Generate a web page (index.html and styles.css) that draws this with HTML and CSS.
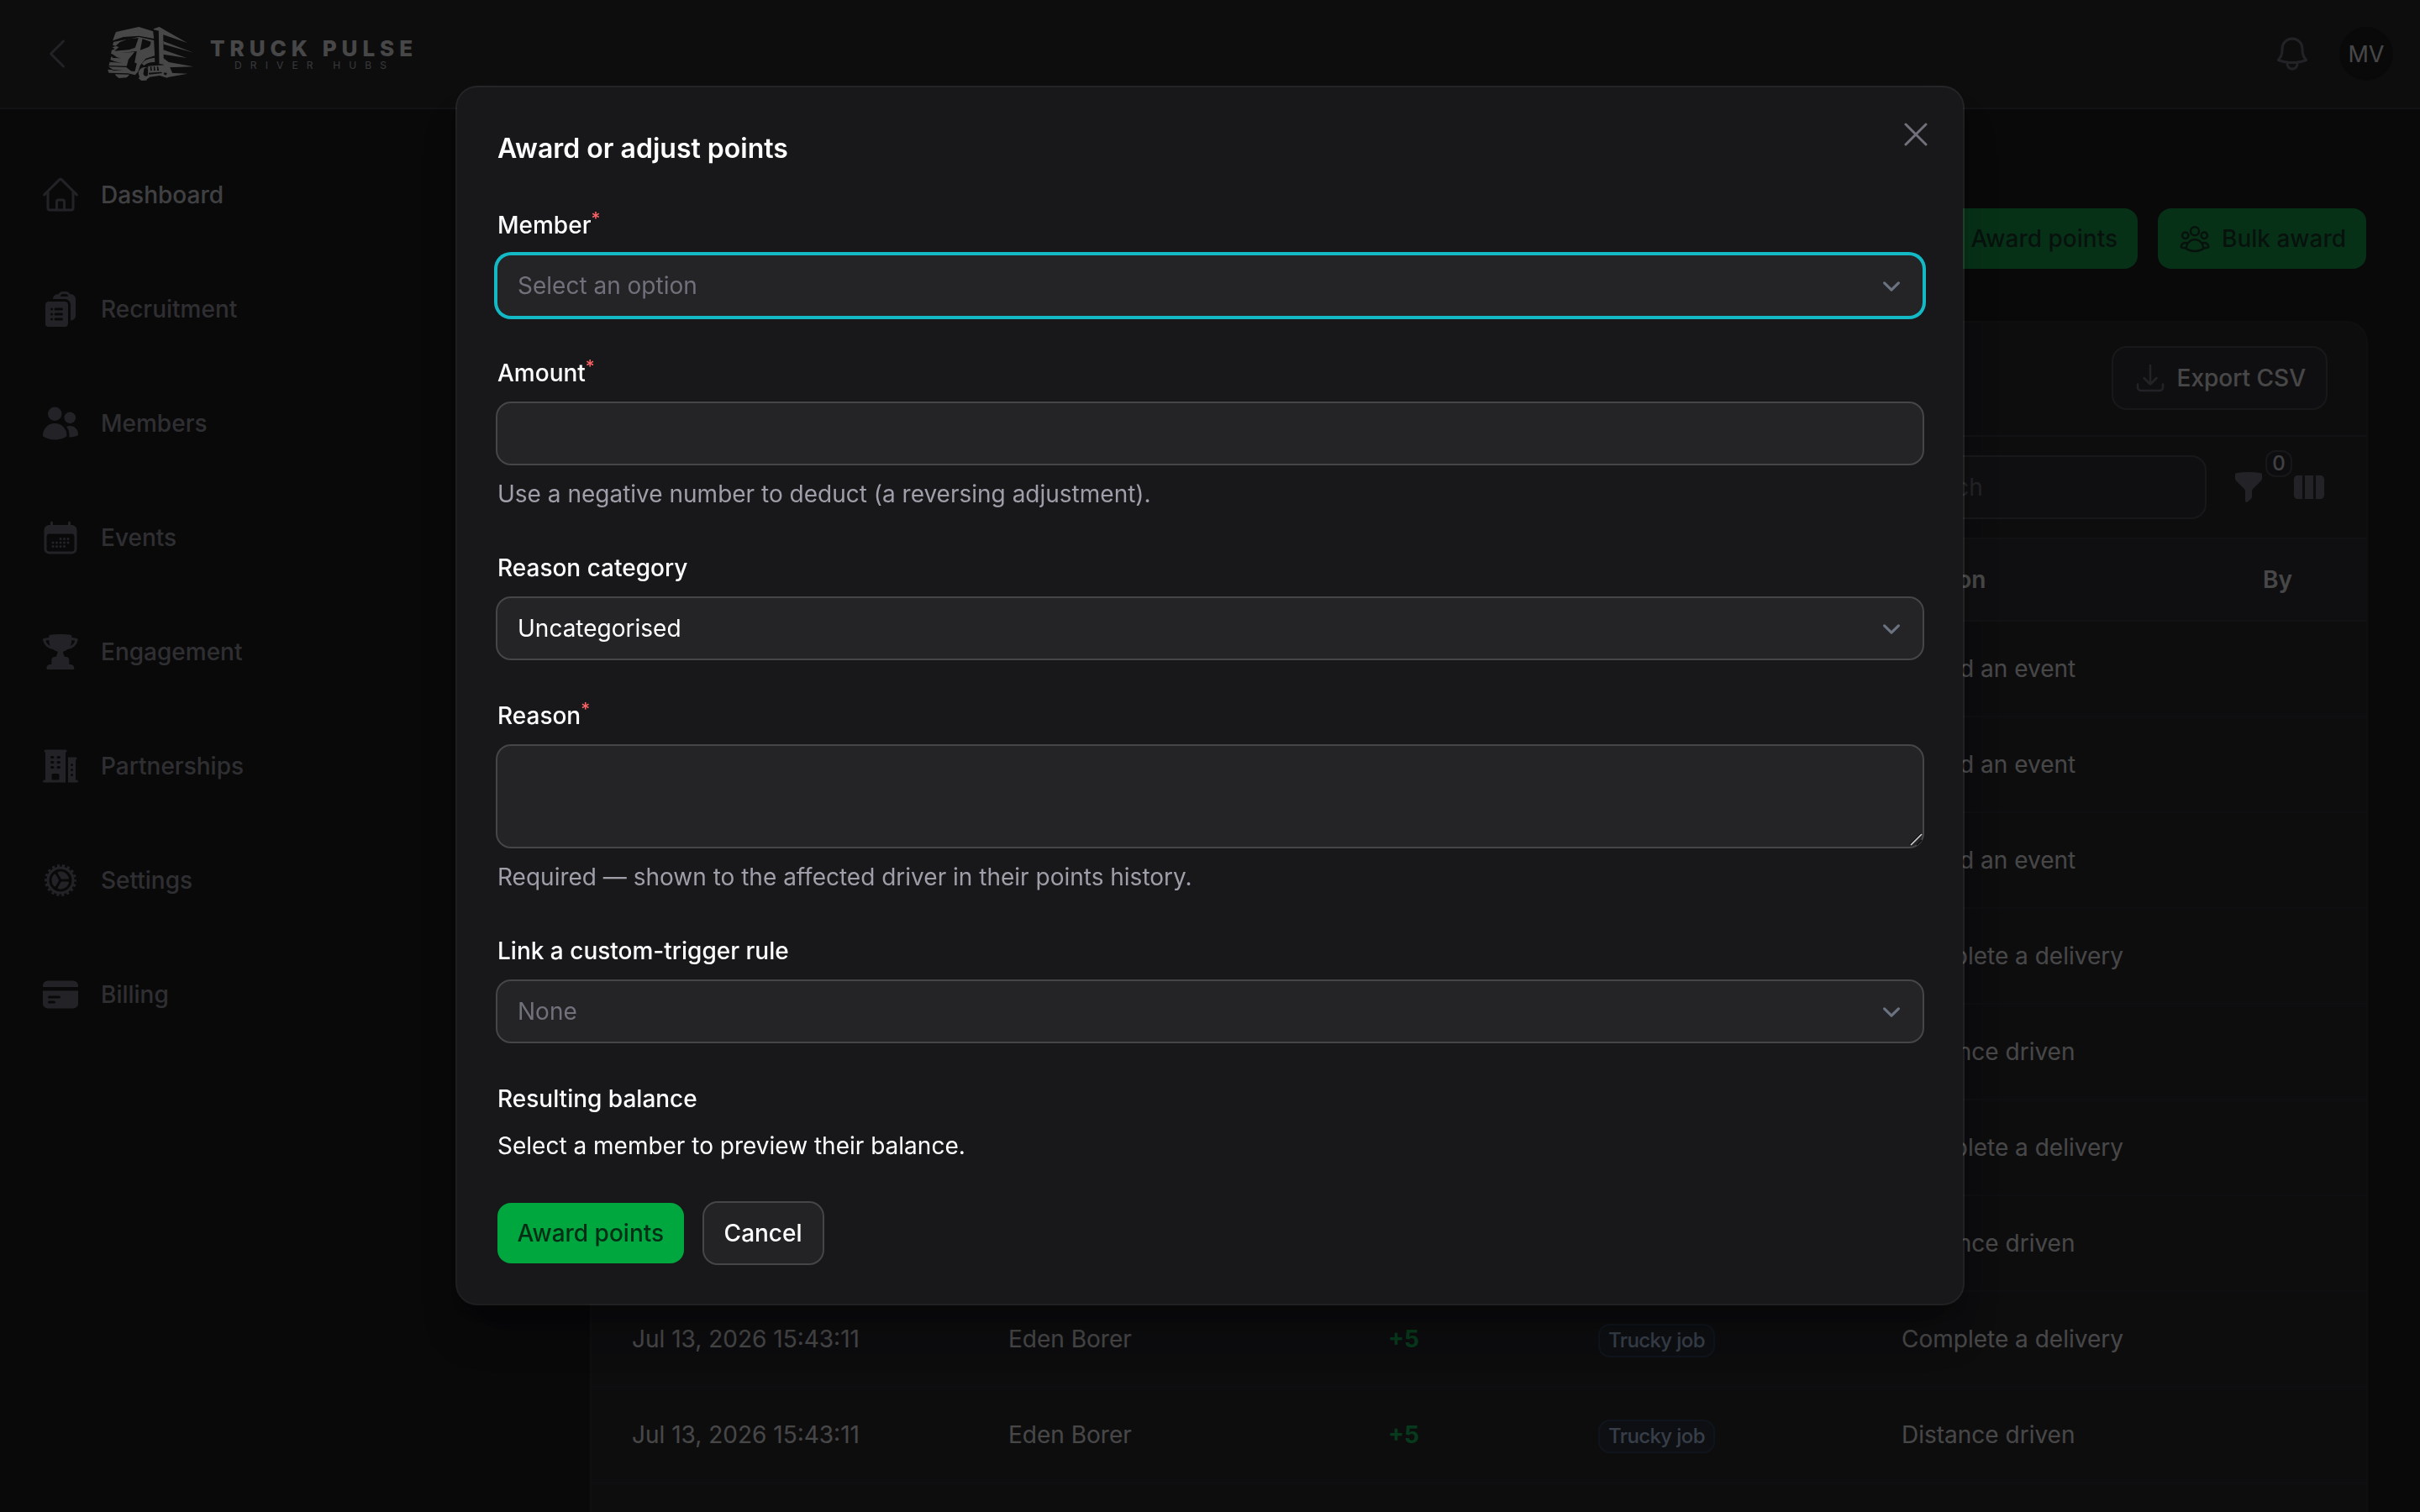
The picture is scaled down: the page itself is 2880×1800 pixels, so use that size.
FILE: index.html
```html
<!DOCTYPE html>
<html lang="en">
<head>
    <meta charset="UTF-8">
    <meta name="viewport" content="width=device-width, initial-scale=1.0">
    <title>Truck Pulse - Points</title>
    <link rel="stylesheet" href="styles.css">
</head>
<body>
    <header class="topbar">
        <svg class="icon icon-back" viewBox="0 0 24 24"><path d="M15.75 19.5 8.25 12l7.5-7.5"/></svg>
        <div class="brand">
            <svg class="brand-truck" viewBox="54 36 308 192">
                <path d="M84 54 165 36l51 16 3 26-54-10-55 4-38 13 8-23Z"/>
                <path fill-rule="evenodd" d="M75 90l90-18 54 12 3 55-32 10-20 24-8 24-14 10 10-40-8-4 8-40-92 10 2-14 12-4-10-6 14-4-12-4ZM98 90l-16 14 12 4-16 14 52-4 22-8 12-34-34 2ZM178 79l-8 40 28-10q10-6 10-20Z"/>
                <path d="M66 130l84-4-22 26-6 24-64-2 4-14 26 2-24-8 2-12 26 6Z"/>
                <path d="M56 178l64 2 18 14 24 2-10 12-26-6-68-2-4-12 20 2Z"/>
                <path d="M80 205l52 1-10 11-28 2-10-8Z"/>
                <path class="cut" d="M122 178l14-28 14-20-4 34-10 20Z"/>
                <path class="cut" d="M64 142l40 6-30-1ZM62 158l46 6-44-2ZM66 188l44 3-34 1Z"/>
                <path d="M218 43l20-7 14 10 2 124-16-2-2-118-18-4Z"/>
                <path d="M238 36l100 57-86-29ZM252 87l108 41-106-30ZM252 118l84 29-84-13ZM252 147l20 15 88 16-94 3-14-11ZM274 200l66 3-72 13Z"/>
                <path d="M176 168q8-18 46-22v16q-22-2-38 12Z"/>
                <path d="M198 176l62-4 16 8 10 24-20 14-26-8-42 6Z"/>
                <circle cx="186" cy="202" r="22"/>
                <path d="M168 214l30 2-6 11-18 1-10-8Z"/>
                <path class="cut" d="M184 186q12-10 14 4l-1 20q-12 6-16-6ZM206 178l4 0 2 14-5 1ZM218 178l4 0 2 14-5 1ZM230 178l4 0 3 14-6 1ZM200 200l44-3 6 4-48 5ZM256 199l10 2-4 8-8-4Z"/>
            </svg>
            <svg class="brand-name" viewBox="0 0 240 40">
                <text class="brand-title" x="0" y="23" textLength="241">TRUCK PULSE</text>
                <text class="brand-sub" x="29" y="38" textLength="181">DRIVER HUBS</text>
            </svg>
        </div>
        <div class="topbar-end">
            <svg class="icon" viewBox="0 0 24 24"><path d="M14.857 17.082a23.848 23.848 0 0 0 5.454-1.31A8.967 8.967 0 0 1 18 9.75V9A6 6 0 0 0 6 9v.75a8.967 8.967 0 0 1-2.312 6.022c1.733.64 3.56 1.085 5.455 1.31m5.714 0a24.255 24.255 0 0 1-5.714 0m5.714 0a3 3 0 1 1-5.714 0"/></svg>
            <div class="avatar">MV</div>
        </div>
    </header>

    <div class="layout">
        <nav class="sidebar">
            <a class="nav-item active">
                <svg class="icon" viewBox="0 0 24 24"><path d="m2.25 12 8.954-8.955c.44-.439 1.152-.439 1.591 0L21.75 12M4.5 9.75v10.125c0 .621.504 1.125 1.125 1.125H9.75v-4.875c0-.621.504-1.125 1.125-1.125h2.25c.621 0 1.125.504 1.125 1.125V21h4.125c.621 0 1.125-.504 1.125-1.125V9.75M8.25 21h8.25"/></svg>
                Dashboard
            </a>
            <a class="nav-item">
                <svg class="icon solid" viewBox="0 0 24 24"><path d="M7.502 6h7.128A3.375 3.375 0 0 1 18 9.375v9.375a3 3 0 0 0 3-3V6.108c0-1.505-1.125-2.811-2.664-2.94a48.972 48.972 0 0 0-.673-.05A3 3 0 0 0 15 1.5h-1.5a3 3 0 0 0-2.663 1.618c-.225.015-.45.032-.673.05C8.662 3.295 7.554 4.542 7.502 6ZM13.5 3A1.5 1.5 0 0 0 12 4.5h4.5A1.5 1.5 0 0 0 15 3h-1.5Z"/><path d="M3 9.375C3 8.339 3.84 7.5 4.875 7.5h9.75c1.036 0 1.875.84 1.875 1.875v11.25c0 1.035-.84 1.875-1.875 1.875h-9.75A1.875 1.875 0 0 1 3 20.625V9.375ZM6 12a.75.75 0 0 0 1.5 0 .75.75 0 0 0-1.5 0Zm2.25 0a.75.75 0 0 1 .75-.75h3.75a.75.75 0 0 1 0 1.5H9a.75.75 0 0 1-.75-.75ZM6 15a.75.75 0 0 0 1.5 0 .75.75 0 0 0-1.5 0Zm2.25 0a.75.75 0 0 1 .75-.75h3.75a.75.75 0 0 1 0 1.5H9a.75.75 0 0 1-.75-.75ZM6 18a.75.75 0 0 0 1.5 0 .75.75 0 0 0-1.5 0Zm2.25 0a.75.75 0 0 1 .75-.75h3.75a.75.75 0 0 1 0 1.5H9a.75.75 0 0 1-.75-.75Z"/></svg>
                Recruitment
            </a>
            <a class="nav-item">
                <svg class="icon solid" viewBox="0 0 24 24"><path d="M4.5 6.375a4.125 4.125 0 1 1 8.25 0 4.125 4.125 0 0 1-8.25 0ZM14.25 8.625a3.375 3.375 0 1 1 6.75 0 3.375 3.375 0 0 1-6.75 0ZM1.5 19.125a7.125 7.125 0 0 1 14.25 0v.003l-.001.119a.75.75 0 0 1-.363.63 13.067 13.067 0 0 1-6.761 1.873c-2.472 0-4.786-.684-6.76-1.873a.75.75 0 0 1-.364-.63l-.001-.122ZM17.25 19.128l-.001.144a2.25 2.25 0 0 1-.233.96 10.088 10.088 0 0 0 5.06-1.01.75.75 0 0 0 .42-.643 4.875 4.875 0 0 0-6.957-4.611 8.586 8.586 0 0 1 1.71 5.157v.003Z"/></svg>
                Members
            </a>
            <a class="nav-item">
                <svg class="icon solid" viewBox="0 0 24 24"><path d="M6.75 2.25A.75.75 0 0 1 7.5 3v1.5h9V3A.75.75 0 0 1 18 3v1.5h.75a3 3 0 0 1 3 3v11.25a3 3 0 0 1-3 3H5.25a3 3 0 0 1-3-3V7.5a3 3 0 0 1 3-3H6V3a.75.75 0 0 1 .75-.75Zm13.5 9a1.5 1.5 0 0 0-1.5-1.5H5.25a1.5 1.5 0 0 0-1.5 1.5v7.5a1.5 1.5 0 0 0 1.5 1.5h13.5a1.5 1.5 0 0 0 1.5-1.5v-7.5Z"/><path class="dots" d="M12 12.75h0M14.25 12.75h0M16.5 12.75h0M7.5 15h0M9.75 15h0M12 15h0M14.25 15h0M16.5 15h0M7.5 17.25h0M9.75 17.25h0M12 17.25h0M14.25 17.25h0"/></svg>
                Events
            </a>
            <a class="nav-item">
                <svg class="icon solid" viewBox="0 0 24 24"><path d="M5.166 2.621v.858c-1.035.148-2.059.33-3.071.543a.75.75 0 0 0-.584.859 6.753 6.753 0 0 0 6.138 5.6 6.73 6.73 0 0 0 2.743 1.346A6.707 6.707 0 0 1 9.279 15H8.54c-1.036 0-1.875.84-1.875 1.875V19.5h-.75a2.25 2.25 0 0 0-2.25 2.25c0 .414.336.75.75.75h15a.75.75 0 0 0 .75-.75 2.25 2.25 0 0 0-2.25-2.25h-.75v-2.625c0-1.036-.84-1.875-1.875-1.875h-.739a6.706 6.706 0 0 1-1.112-3.173 6.73 6.73 0 0 0 2.743-1.347 6.753 6.753 0 0 0 6.139-5.6.75.75 0 0 0-.585-.858 47.077 47.077 0 0 0-3.07-.543V2.62a.75.75 0 0 0-.658-.744 49.22 49.22 0 0 0-6.093-.377c-2.063 0-4.096.128-6.093.377a.75.75 0 0 0-.657.744Zm0 2.629c0 1.196.312 2.32.857 3.294A5.266 5.266 0 0 1 3.16 5.337a45.6 45.6 0 0 1 2.006-.343v.256Zm13.5 0v-.256c.674.1 1.343.214 2.006.343a5.265 5.265 0 0 1-2.863 3.207 6.72 6.72 0 0 0 .857-3.294Z"/></svg>
                Engagement
            </a>
            <a class="nav-item">
                <svg class="icon solid" viewBox="0 0 24 24"><path d="M3 2.25a.75.75 0 0 0 0 1.5v16.5h-.75a.75.75 0 0 0 0 1.5H15v-18a.75.75 0 0 0 0-1.5H3ZM6.75 19.5v-2.25a.75.75 0 0 1 .75-.75h3a.75.75 0 0 1 .75.75v2.25a.75.75 0 0 1-.75.75h-3a.75.75 0 0 1-.75-.75ZM6.75 6a.75.75 0 0 0 0 1.5h.75a.75.75 0 0 0 0-1.5h-.75ZM6.75 9a.75.75 0 0 0 0 1.5h.75a.75.75 0 0 0 0-1.5h-.75ZM6.75 12a.75.75 0 0 0 0 1.5h.75a.75.75 0 0 0 0-1.5h-.75ZM10.5 6a.75.75 0 0 0 0 1.5h.75a.75.75 0 0 0 0-1.5h-.75ZM10.5 9a.75.75 0 0 0 0 1.5h.75a.75.75 0 0 0 0-1.5h-.75ZM10.5 12a.75.75 0 0 0 0 1.5h.75a.75.75 0 0 0 0-1.5h-.75ZM16.5 6.75v15h5.25a.75.75 0 0 0 0-1.5H21v-12a.75.75 0 0 0 0-1.5h-4.5ZM18 11.25a.75.75 0 0 0 1.5 0 .75.75 0 0 0-1.5 0ZM18 14.25a.75.75 0 0 0 1.5 0 .75.75 0 0 0-1.5 0ZM18 17.25a.75.75 0 0 0 1.5 0 .75.75 0 0 0-1.5 0Z"/></svg>
                Partnerships
            </a>
            <a class="nav-item">
                <svg class="icon solid" viewBox="0 0 24 24"><circle class="cog-ring" cx="12" cy="12" r="7.5"/><circle class="cog-teeth" cx="12" cy="12" r="8.75"/><path d="M17.004 10.407c.138.435-.216.842-.672.842h-3.465a.75.75 0 0 1-.65-.375l-1.732-3c-.229-.396-.053-.907.393-1.004a5.252 5.252 0 0 1 6.126 3.537ZM8.12 8.464c.307-.338.838-.235 1.066.16l1.732 3a.75.75 0 0 1 0 .75l-1.732 3.001c-.229.396-.76.498-1.067.16A5.231 5.231 0 0 1 6.75 12c0-1.362.519-2.603 1.37-3.536ZM10.878 17.13c-.447-.097-.623-.608-.394-1.003l1.733-3.003a.75.75 0 0 1 .65-.375h3.465c.457 0 .81.408.672.843a5.252 5.252 0 0 1-6.126 3.538Z"/></svg>
                Settings
            </a>
            <a class="nav-item">
                <svg class="icon solid" viewBox="0 0 24 24"><path d="M4.5 3.75a3 3 0 0 0-3 3v.75h21v-.75a3 3 0 0 0-3-3h-15Z"/><path d="M22.5 9.75h-21v7.5a3 3 0 0 0 3 3h15a3 3 0 0 0 3-3v-7.5Zm-18 3.75a.75.75 0 0 1 .75-.75h6a.75.75 0 0 1 0 1.5h-6a.75.75 0 0 1-.75-.75Zm.75 2.25a.75.75 0 0 0 0 1.5h3a.75.75 0 0 0 0-1.5h-3Z"/></svg>
                Billing
            </a>
        </nav>

        <main class="content">
            <div class="page-actions">
                <button type="button" class="btn btn-success">Award points</button>
                <button type="button" class="btn btn-success">
                    <svg class="icon icon-sm" viewBox="0 0 24 24"><path d="M18 18.72a9.094 9.094 0 0 0 3.741-.479 3 3 0 0 0-4.682-2.72m.94 3.198.001.031c0 .225-.012.447-.037.666A11.944 11.944 0 0 1 12 21c-2.17 0-4.207-.576-5.963-1.584A6.062 6.062 0 0 1 6 18.719m12 0a5.971 5.971 0 0 0-.941-3.197m0 0A5.995 5.995 0 0 0 12 12.75a5.995 5.995 0 0 0-5.058 2.772m0 0a3 3 0 0 0-4.681 2.72 8.986 8.986 0 0 0 3.74.477m.94-3.197a5.971 5.971 0 0 0-.94 3.197M15 6.75a3 3 0 1 1-6 0 3 3 0 0 1 6 0Zm6 3a2.25 2.25 0 1 1-4.5 0 2.25 2.25 0 0 1 4.5 0Zm-13.5 0a2.25 2.25 0 1 1-4.5 0 2.25 2.25 0 0 1 4.5 0Z"/></svg>
                    Bulk award
                </button>
            </div>

            <section class="table-card">
                <div class="table-head-actions">
                    <button type="button" class="btn btn-gray">
                        <svg class="icon icon-sm" viewBox="0 0 24 24"><path d="M3 16.5v2.25A2.25 2.25 0 0 0 5.25 21h13.5A2.25 2.25 0 0 0 21 18.75V16.5M16.5 12 12 16.5m0 0L7.5 12m4.5 4.5V3"/></svg>
                        Export CSV
                    </button>
                </div>
                <div class="table-toolbar">
                    <div class="search">Search</div>
                    <div class="filter">
                        <svg class="icon icon-sm solid" viewBox="0 0 20 20"><path d="M2.628 1.601C5.028 1.206 7.49 1 10 1s4.973.206 7.372.601a.75.75 0 0 1 .628.74v2.288a2.25 2.25 0 0 1-.659 1.59l-4.682 4.683a2.25 2.25 0 0 0-.659 1.59v3.037c0 .684-.31 1.33-.844 1.757l-1.937 1.55A.75.75 0 0 1 8 18.25v-5.757a2.25 2.25 0 0 0-.659-1.591L2.659 6.22A2.25 2.25 0 0 1 2 4.629V2.34a.75.75 0 0 1 .628-.74Z"/></svg>
                        <span class="filter-count">0</span>
                    </div>
                    <svg class="icon icon-sm solid" viewBox="0 0 20 20"><path d="M14 17h2.75A2.25 2.25 0 0 0 19 14.75v-9.5A2.25 2.25 0 0 0 16.75 3H14v14ZM12.5 3h-5v14h5V3ZM3.25 3H6v14H3.25A2.25 2.25 0 0 1 1 14.75v-9.5A2.25 2.25 0 0 1 3.25 3Z"/></svg>
                </div>
                <div class="row row-head"><span class="reason">Reason</span><span>By</span></div>
                <div class="row"><span class="reason">Attend an event</span></div>
                <div class="row"><span class="reason">Attend an event</span></div>
                <div class="row"><span class="reason">Attend an event</span></div>
                <div class="row"><span class="reason">Complete a delivery</span></div>
                <div class="row"><span class="reason">Distance driven</span></div>
                <div class="row"><span class="reason">Complete a delivery</span></div>
                <div class="row"><span class="reason">Distance driven</span></div>
                <div class="row"><span>Jul 13, 2026 15:43:11</span><span>Eden Borer</span><span class="points">+5</span><span class="badge">Trucky job</span><span class="reason">Complete a delivery</span></div>
                <div class="row"><span>Jul 13, 2026 15:43:11</span><span>Eden Borer</span><span class="points">+5</span><span class="badge">Trucky job</span><span class="reason">Distance driven</span></div>
                <div class="row"></div>
            </section>
        </main>
    </div>

    <div class="overlay">
        <form class="modal">
            <svg class="icon modal-close" viewBox="0 0 24 24"><path d="M6 18 18 6M6 6l12 12"/></svg>
            <h2>Award or adjust points</h2>

            <div class="field">
                <label>Member<sup>*</sup></label>
                <div class="input focused placeholder">Select an option
                    <svg class="chevron" viewBox="0 0 20 20"><path d="m6 8 4 4 4-4"/></svg>
                </div>
            </div>
            <div class="field">
                <label>Amount<sup>*</sup></label>
                <div class="input"></div>
                <p class="hint">Use a negative number to deduct (a reversing adjustment).</p>
            </div>
            <div class="field">
                <label>Reason category</label>
                <div class="input">Uncategorised
                    <svg class="chevron" viewBox="0 0 20 20"><path d="m6 8 4 4 4-4"/></svg>
                </div>
            </div>
            <div class="field">
                <label>Reason<sup>*</sup></label>
                <div class="input textarea">
                    <svg class="grip" viewBox="0 0 16 16"><path class="grip-edge" d="M1 14.5 14.5 1M9 15 15 9"/><path class="grip-line" d="M2 15 15 2"/></svg>
                </div>
                <p class="hint">Required — shown to the affected driver in their points history.</p>
            </div>
            <div class="field">
                <label>Link a custom-trigger rule</label>
                <div class="input placeholder">None
                    <svg class="chevron" viewBox="0 0 20 20"><path d="m6 8 4 4 4-4"/></svg>
                </div>
            </div>
            <div class="field">
                <label>Resulting balance</label>
                <p>Select a member to preview their balance.</p>
            </div>

            <div class="modal-actions">
                <button type="button" class="btn btn-success">Award points</button>
                <button type="button" class="btn btn-gray">Cancel</button>
            </div>
        </form>
    </div>
</body>
</html>
```
FILE: styles.css
```css
* {
    box-sizing: border-box;
}
body {
    margin: 0;
    height: 1800px;
    overflow: hidden;
    background-color: #09090b;
    color: #ffffff;
    font-family: Inter, "Liberation Sans", sans-serif;
    font-size: 28px;
    line-height: 40px;
}
h2, p {
    margin: 0;
}
.icon {
    width: 48px;
    height: 48px;
    flex-shrink: 0;
    fill: none;
    stroke: #71717b;
    stroke-width: 1.5;
    stroke-linecap: round;
    stroke-linejoin: round;
}
.icon-sm {
    width: 40px;
    height: 40px;
}
.icon.solid {
    fill: #71717b;
    fill-rule: evenodd;
    stroke: none;
}
.solid .dots {
    stroke: #71717b;
    stroke-width: 1.5;
}
.solid .cog-ring {
    fill: none;
    stroke: #71717b;
    stroke-width: 1.5;
}
.solid .cog-teeth {
    fill: none;
    stroke: #71717b;
    stroke-width: 1.5;
    stroke-linecap: butt;
    stroke-dasharray: 1.5 1.554;
    stroke-dashoffset: 0.75;
}

/* Top bar */
.topbar {
    display: flex;
    align-items: center;
    height: 130px;
    padding: 0 32px 2px 44px;
    background-color: #18181b;
    box-shadow: inset 0 -2px 0 rgba(255, 255, 255, 0.1);
}
.brand {
    display: flex;
    align-items: center;
    gap: 19px;
    margin-left: 36px;
}
.brand-truck {
    width: 103px;
    height: 64px;
    fill: #ffffff;
}
.brand-truck .cut {
    fill: #18181b;
}
.brand-name {
    width: 240px;
    height: 40px;
    overflow: visible;
    fill: #ffffff;
}
.brand-title {
    font-size: 26px;
    font-weight: 800;
}
.brand-sub {
    font-size: 12px;
    fill: #c4c4c8;
}
.topbar-end {
    display: flex;
    align-items: center;
    gap: 32px;
    margin-left: auto;
}
.avatar {
    width: 64px;
    height: 64px;
    border-radius: 50%;
    background-color: #09090b;
    font-size: 27px;
    line-height: 66px;
    text-align: center;
}

/* Sidebar */
.layout {
    display: flex;
}
.sidebar {
    display: flex;
    flex-direction: column;
    gap: 88px;
    width: 640px;
    flex-shrink: 0;
    padding: 78px 48px;
}
.nav-item {
    display: flex;
    align-items: center;
    gap: 24px;
    height: 48px;
    color: #9f9fa9;
    font-weight: 500;
}
.nav-item.active {
    color: #e4e4e7;
}

/* Buttons */
.btn {
    display: flex;
    align-items: center;
    gap: 12px;
    height: 72px;
    padding: 0 24px;
    border: 0;
    border-radius: 16px;
    font: inherit;
    font-weight: 500;
    white-space: nowrap;
}
.btn-success {
    background-color: #00a63e;
    color: #032e15;
}
.btn-success .icon {
    stroke: #032e15;
}
.btn-gray {
    background-color: rgba(255, 255, 255, 0.05);
    box-shadow: 0 0 0 2px rgba(255, 255, 255, 0.2);
    color: #ffffff;
}

/* Points table */
.content {
    flex: 1;
    padding: 118px 64px 0;
}
.page-actions {
    display: flex;
    justify-content: flex-end;
    gap: 24px;
    margin-bottom: 64px;
}
.table-card {
    border-radius: 24px 24px 0 0;
    background-color: #18181b;
    box-shadow: 0 0 0 2px rgba(255, 255, 255, 0.1);
}
.table-head-actions {
    display: flex;
    justify-content: flex-end;
    height: 136px;
    padding: 30px 48px 0;
    border-bottom: 2px solid rgba(255, 255, 255, 0.1);
}
.table-toolbar {
    display: flex;
    align-items: center;
    justify-content: flex-end;
    gap: 32px;
    height: 122px;
    padding: 0 48px;
    border-bottom: 2px solid rgba(255, 255, 255, 0.1);
}
.search {
    width: 448px;
    height: 72px;
    padding: 16px 24px 16px 91px;
    border-radius: 16px;
    background-color: rgba(255, 255, 255, 0.05);
    box-shadow: 0 0 0 2px rgba(255, 255, 255, 0.2);
    color: #71717b;
}
.filter {
    position: relative;
    display: flex;
}
.filter-count {
    position: absolute;
    left: 42px;
    top: -22px;
    width: 28px;
    height: 28px;
    border-radius: 10px;
    background-color: #1b1b1e;
    box-shadow: 0 0 0 2px rgba(159, 159, 169, 0.3);
    font-size: 24px;
    line-height: 28px;
    font-weight: 500;
    text-align: center;
    color: #e4e4e7;
}
.row {
    display: grid;
    grid-template-columns: 448px 452px 252px 359px 430px 1fr;
    align-items: center;
    justify-items: start;
    height: 114px;
    padding-left: 48px;
    border-bottom: 2px solid rgba(255, 255, 255, 0.05);
    white-space: nowrap;
}
.row-head {
    height: 98px;
    background-color: rgba(255, 255, 255, 0.05);
    font-weight: 600;
}
.reason {
    grid-column: 5;
}
.points {
    font-weight: 700;
    color: #00c950;
}
.badge {
    height: 36px;
    margin-top: 4px;
    padding: 0 10px;
    border-radius: 12px;
    background-color: rgba(81, 162, 255, 0.06);
    box-shadow: 0 0 0 2px rgba(81, 162, 255, 0.25);
    color: #bedbff;
    font-size: 24px;
    line-height: 36px;
    font-weight: 500;
    letter-spacing: -0.025em;
}

/* Modal */
.overlay {
    position: fixed;
    inset: 0;
    display: flex;
    align-items: flex-start;
    justify-content: center;
    padding-top: 104px;
    background-color: rgba(9, 9, 11, 0.75);
}
.modal {
    position: relative;
    display: flex;
    flex-direction: column;
    gap: 48px;
    width: 1792px;
    padding: 48px;
    border-radius: 24px;
    background-color: #18181b;
    box-shadow: 0 0 0 2px rgba(255, 255, 255, 0.1), 0 40px 50px -10px rgba(0, 0, 0, 0.3), 0 16px 20px -12px rgba(0, 0, 0, 0.2);
}
.modal h2 {
    height: 48px;
    font-size: 32px;
    line-height: 50px;
    font-weight: 600;
}
.modal-close {
    position: absolute;
    top: 32px;
    right: 32px;
}
.field {
    display: flex;
    flex-direction: column;
    gap: 16px;
}
.field label {
    font-weight: 500;
}
.field sup {
    position: relative;
    top: -0.5em;
    font-size: 75%;
    line-height: 0;
    vertical-align: baseline;
    color: #ff6467;
}
.input {
    display: flex;
    align-items: center;
    justify-content: space-between;
    height: 72px;
    padding: 0 16px 0 24px;
    border-radius: 16px;
    background-color: #242427;
    box-shadow: 0 0 0 2px rgba(255, 255, 255, 0.2);
}
.input.focused {
    box-shadow: 0 0 0 4px #13bac6;
}
.input.placeholder {
    color: #71717b;
}
.input.textarea {
    position: relative;
    height: 120px;
}
.chevron {
    width: 42px;
    height: 42px;
    margin-top: 2px;
    fill: none;
    stroke: #6b7280;
    stroke-width: 1.5;
    stroke-linecap: round;
    stroke-linejoin: round;
}
.grip {
    position: absolute;
    right: 0;
    bottom: 1px;
    width: 16px;
    height: 16px;
    fill: none;
}
.grip-edge {
    stroke: #0a0a0a;
    stroke-width: 1.5;
}
.grip-line {
    stroke: #cfcfcf;
    stroke-width: 1.7;
}
.hint {
    color: #9f9fa9;
}
.modal-actions {
    display: flex;
    gap: 24px;
}
.modal-actions .btn-success {
    padding: 0 23.5px;
}
```
